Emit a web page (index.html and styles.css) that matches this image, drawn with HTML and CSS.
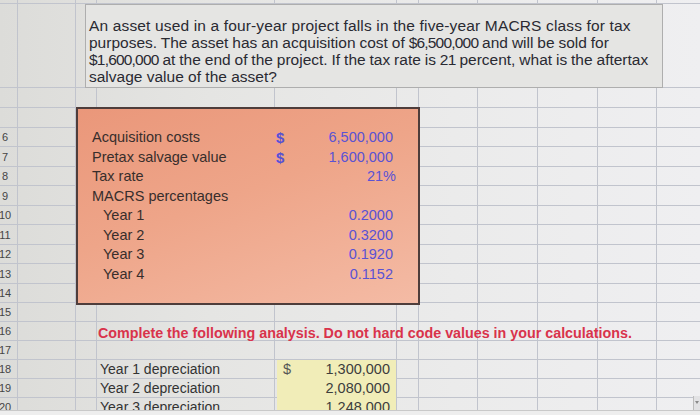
FILE: index.html
```html
<!DOCTYPE html>
<html>
<head>
<meta charset="utf-8">
<link rel="stylesheet" href="styles.css">
</head>
<body>
<div class="screen">
  <div class="sheet">
    <div class="rowhead">
      <div class="sp"></div>
      <div class="rn">6</div>
      <div class="rn t">7</div>
      <div class="rn">8</div>
      <div class="rn t">9</div>
      <div class="rn">10</div>
      <div class="rn t">11</div>
      <div class="rn">12</div>
      <div class="rn t">13</div>
      <div class="rn">14</div>
      <div class="rn">15</div>
      <div class="rn">16</div>
      <div class="rn">17</div>
      <div class="rn">18</div>
      <div class="rn">19</div>
      <div class="rn">20</div>
    </div>

    <div class="question">
      <span class="ql wide">An asset used in a four-year project falls in the five-year MACRS class for tax</span>
      <span class="ql tight">purposes. The asset has an acquisition cost of <span class="num">$6,500,000</span> and will be sold for</span>
      <span class="ql tight"><span class="num">$1,600,000</span> at the end of the project. If the tax rate is <span class="num">21</span> percent, what is the aftertax</span>
      <span class="ql">salvage value of the asset?</span>
    </div>

    <div class="box">
      <span class="lb">Acquisition costs</span><span class="cur">$</span><span class="val">6,500,000</span>
      <span class="lb">Pretax salvage value</span><span class="cur">$</span><span class="val">1,600,000</span>
      <span class="lb">Tax rate</span><span></span><span class="val pct">21%</span>
      <span class="lb">MACRS percentages</span><span></span><span></span>
      <span class="lb sub">Year 1</span><span></span><span class="val">0.2000</span>
      <span class="lb sub">Year 2</span><span></span><span class="val">0.3200</span>
      <span class="lb sub">Year 3</span><span></span><span class="val">0.1920</span>
      <span class="lb sub">Year 4</span><span></span><span class="val">0.1152</span>
    </div>

    <div class="note">Complete the following analysis. Do not hard code values in your calculations.</div>

    <div class="dl row18">Year 1 depreciation</div>
    <div class="yc row18"><span class="ycur">$</span><span>1,300,000</span></div>
    <div class="dl row19">Year 2 depreciation</div>
    <div class="yc row19"><span>2,080,000</span></div>
    <div class="dl row20">Year 3 depreciation</div>
    <div class="yc row20"><span>1,248,000</span></div>
  </div>
  <div class="bottombar"></div>
  <div class="scroll"><span class="arrow"></span></div>
</div>
</body>
</html>
```

FILE: styles.css
```css
body {
  margin: 0;
  background: #e8e8e6;
}

.screen {
  width: 700px;
  height: 415px;
  overflow: hidden;
  position: relative;
  font-family: "Liberation Sans", Arial, sans-serif;
}

.sheet {
  --g: linear-gradient(#c1c4cd, #c1c4cd);
  height: 410px;
  overflow: hidden;
  display: grid;
  grid-template-columns: 18px 58px 21px 178px 122px 22px 59px 60px 60px 59px 43px;
  grid-template-rows: 4px 84px 20px 20px 19px 20px 19px 20px 19px 20px 19px 20px 19px 19px 19px 19px 19px 19px 19px;
  background:
    var(--g) 17px 0 / 1px 100% no-repeat,
    var(--g) 75px 0 / 1px 100% no-repeat,
    var(--g) 96px 0 / 1px 100% no-repeat,
    var(--g) 274px 0 / 1px 100% no-repeat,
    var(--g) 396px 0 / 1px 100% no-repeat,
    var(--g) 418px 0 / 1px 100% no-repeat,
    var(--g) 477px 0 / 1px 100% no-repeat,
    var(--g) 537px 0 / 1px 100% no-repeat,
    var(--g) 597px 0 / 1px 100% no-repeat,
    var(--g) 656px 0 / 1px 100% no-repeat,
    var(--g) 0 3px / 100% 1px no-repeat,
    var(--g) 0 87px / 100% 1px no-repeat,
    var(--g) 0 107px / 100% 1px no-repeat,
    var(--g) 0 127px / 100% 1px no-repeat,
    var(--g) 0 146px / 100% 1px no-repeat,
    var(--g) 0 166px / 100% 1px no-repeat,
    var(--g) 0 185px / 100% 1px no-repeat,
    var(--g) 0 205px / 100% 1px no-repeat,
    var(--g) 0 224px / 100% 1px no-repeat,
    var(--g) 0 244px / 100% 1px no-repeat,
    var(--g) 0 263px / 100% 1px no-repeat,
    var(--g) 0 283px / 100% 1px no-repeat,
    var(--g) 0 302px / 100% 1px no-repeat,
    var(--g) 0 321px / 100% 1px no-repeat,
    var(--g) 0 340px / 100% 1px no-repeat,
    var(--g) 0 359px / 100% 1px no-repeat,
    var(--g) 0 378px / 100% 1px no-repeat,
    var(--g) 0 397px / 100% 1px no-repeat,
    linear-gradient(90deg, #dcdcd9 0%, #e5e5e3 30%, #ebebeb 65%, #efeff1 100%);
}

/* row numbers */
.rowhead {
  grid-column: 1;
  grid-row: 1 / -1;
  display: flex;
  flex-direction: column;
  font-size: 11px;
  color: #454545;
}

.sp {
  height: 128px;
  flex: none;
}

.rn {
  flex: none;
  height: 19px;
  line-height: 19px;
  width: 22px;
  margin-left: -6px;
  text-align: center;
}

.rn.t {
  height: 20px;
  line-height: 20px;
}

/* question text box */
.question {
  grid-column: 3 / 11;
  grid-row: 2;
  margin: 0 -6px 0 9px;
  background: #e5e5e3;
  border: 1px solid #aeaeae;
  padding: 12px 0 0 3px;
  font-size: 15.5px;
  line-height: 17px;
  color: #2a2a32;
  white-space: nowrap;
  display: flex;
  flex-direction: column;
}

.ql.wide {
  letter-spacing: 0.15px;
}

.ql.tight {
  word-spacing: -0.4px;
}

.num {
  letter-spacing: -0.8px;
}

/* orange input block */
.box {
  grid-column: 3 / 7;
  grid-row: 4 / 14;
  margin: -1px -1px -2px 0;
  border: 2px solid #4e3d3b;
  background: linear-gradient(160deg, #ea977a 0%, #eea589 45%, #f4bba5 100%);
  padding: 19px 25px 0 14px;
  display: grid;
  grid-template-columns: 184px 14px 1fr;
  grid-template-rows: 19px 20px 19px 20px 19px 20px 19px 20px;
  align-items: center;
  font-size: 14.5px;
  line-height: 1;
  color: #382e2c;
}

.lb {
  white-space: nowrap;
}

.lb.sub {
  padding-left: 11px;
}

.cur {
  color: #5750d6;
  font-weight: bold;
  font-size: 15px;
}

.val {
  color: #5a52d4;
  text-align: right;
}

.val.pct {
  margin-right: -3px;
}

/* instructions */
.note {
  grid-column: 4 / -1;
  grid-row: 15;
  padding: 2px 0 0 1px;
  font-weight: bold;
  font-size: 14.3px;
  line-height: 19px;
  color: #d9334b;
  white-space: nowrap;
}

/* depreciation rows */
.row18 { grid-row: 17; }
.row19 { grid-row: 18; }
.row20 { grid-row: 19; }

.dl {
  grid-column: 4;
  padding-left: 3px;
  font-size: 14px;
  line-height: 19px;
  color: #333;
  white-space: nowrap;
}

.yc {
  grid-column: 5;
  margin: 0 1px 0 2px;
  background: #f1edb8;
  display: flex;
  justify-content: flex-end;
  padding: 0 6px;
  font-size: 14.5px;
  line-height: 19px;
  color: #3d3d3d;
}

.ycur {
  margin-right: auto;
  color: #555;
}

.bottombar {
  height: 5px;
  background: #eeeeee;
  border-top: 1px solid #c9c9c9;
  box-sizing: border-box;
}

.scroll {
  position: absolute;
  right: 0;
  top: 396px;
  width: 6px;
  height: 14px;
  background: #e2e2e4;
  border-left: 1px solid #bcbcbc;
}

.arrow {
  display: block;
  margin: 5px 0 0 1px;
  width: 0;
  height: 0;
  border-left: 2px solid transparent;
  border-right: 2px solid transparent;
  border-top: 3px solid #8a8a8a;
}
```
